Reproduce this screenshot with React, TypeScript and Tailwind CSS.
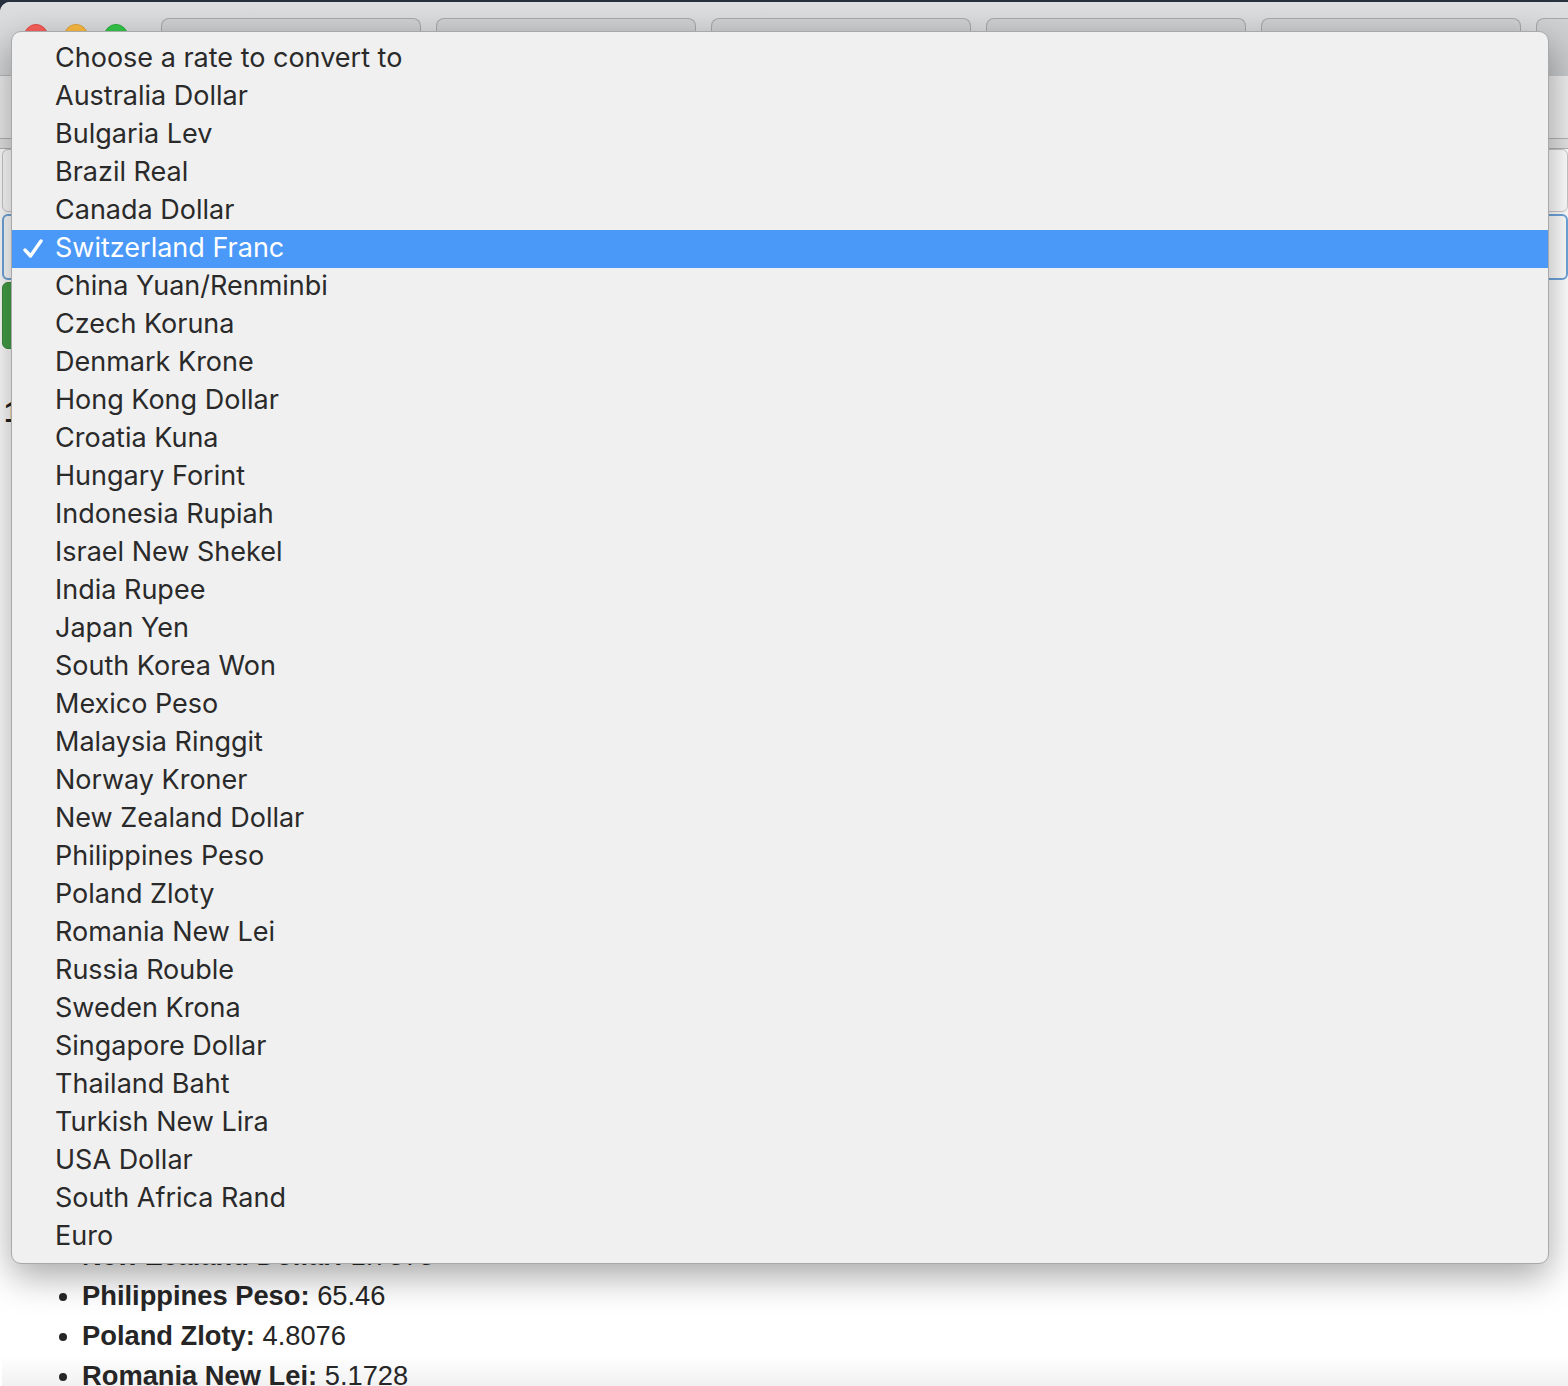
import React from 'react';

const rates = [
  'Choose a rate to convert to',
  'Australia Dollar',
  'Bulgaria Lev',
  'Brazil Real',
  'Canada Dollar',
  'Switzerland Franc',
  'China Yuan/Renminbi',
  'Czech Koruna',
  'Denmark Krone',
  'Hong Kong Dollar',
  'Croatia Kuna',
  'Hungary Forint',
  'Indonesia Rupiah',
  'Israel New Shekel',
  'India Rupee',
  'Japan Yen',
  'South Korea Won',
  'Mexico Peso',
  'Malaysia Ringgit',
  'Norway Kroner',
  'New Zealand Dollar',
  'Philippines Peso',
  'Poland Zloty',
  'Romania New Lei',
  'Russia Rouble',
  'Sweden Krona',
  'Singapore Dollar',
  'Thailand Baht',
  'Turkish New Lira',
  'USA Dollar',
  'South Africa Rand',
  'Euro',
];

const selected = 'Switzerland Franc';

const listed = [
  { name: 'New Zealand Dollar', value: '1.7373' },
  { name: 'Philippines Peso', value: '65.46' },
  { name: 'Poland Zloty', value: '4.8076' },
  { name: 'Romania New Lei', value: '5.1728' },
];

const tabs = [0, 1, 2, 3, 4, 5];

const Check = () => (
  <svg width="22" height="22" viewBox="0 0 22 22" className="shrink-0">
    <path d="M3 12 L8.5 18 L19 3" fill="none" stroke="#fff" strokeWidth="3.4" strokeLinecap="round" strokeLinejoin="round" />
  </svg>
);

export default function App() {
  return (
    <div className="relative h-[1386px] w-[1568px] overflow-hidden bg-[#26313d] font-['Liberation_Sans',sans-serif]">
      <div className="flex h-full flex-col rounded-tl-[10px] mt-[2px] overflow-hidden bg-white">
        {/* window toolbar with tabs */}
        <div className="flex h-[74px] shrink-0 items-start bg-gradient-to-b from-[#dcdee0] to-[#d3d5d7] border-b border-[#b9b9b9]">
          <div className="flex items-center gap-[16px] pl-[24px] pt-[22px]">
            <span className="h-[24px] w-[24px] rounded-full bg-[#fc605c] border border-[#de4a46]" />
            <span className="h-[24px] w-[24px] rounded-full bg-[#fdbc40] border border-[#de9f34]" />
            <span className="h-[24px] w-[24px] rounded-full bg-[#34c84a] border border-[#27aa35]" />
          </div>
          <div className="ml-[33px] flex gap-[15px] pt-[16px]">
            {tabs.map((t) => (
              <div key={t} className="h-[58px] w-[260px] rounded-t-[8px] border border-b-0 border-[#a8a8a8] bg-gradient-to-b from-[#cfd1d3] to-[#c6c8ca]" />
            ))}
          </div>
          <div className="ml-auto mr-0 mt-[34px] flex h-[28px] w-[18px] items-center justify-end">
            <svg width="18" height="28" viewBox="0 0 18 28">
              <path d="M2 4 L9 0 L18 2 L18 24 L10 20 L2 26 Z" fill="#1769c2" />
              <circle cx="14" cy="13" r="7" fill="#fff" />
            </svg>
          </div>
        </div>
        {/* secondary bar */}
        <div className="h-[62px] shrink-0 bg-[#ececec]" />
        <div className="h-[11px] shrink-0 border-y border-[#b3b3b3] bg-[#e3e3e3]" />

        {/* page content */}
        <div className="flex flex-1 flex-col bg-white pl-[2px]">
          <div className="h-[63px] rounded-[6px] border border-[#c8c8c8] bg-white" />
          <div className="mt-[2px] h-[66px] rounded-[6px] border-2 border-[#6ea6dc] bg-white" />
          <div className="mt-[2px] h-[67px] w-[300px] rounded-[6px] bg-[#44a047] border border-[#3a8a3d]" />
          <div className="mt-[40px] pl-[2px] text-[30px] font-bold text-[#222]">1 USD</div>
          <div className="flex-1" />
          <ul className="-mb-[8px] pl-[80px] text-[27.3px] leading-[40px] text-[#262626] list-disc bg-gradient-to-b from-white from-[75%] to-[#ececec]">
            {listed.map((r) => (
              <li key={r.name}>
                <b>{r.name}:</b> {r.value}
              </li>
            ))}
          </ul>
        </div>
      </div>

      {/* native select popup menu */}
      <div className="absolute left-[11px] top-[31px] w-[1538px] rounded-[10px] border border-[#a9a9a9] bg-[#f0f0f0] pt-[8px] pb-[7px] shadow-[0_12px_36px_rgba(0,0,0,0.35)] font-['Inter',sans-serif] text-[27px] text-[#2a2a2a]">
        {rates.map((r) => {
          const on = r === selected;
          return (
            <div key={r} className={`flex h-[38px] items-center ${on ? 'bg-[#4a98f8] text-white' : ''}`}>
              <div className="flex w-[43px] justify-start pl-[10px]">{on && <Check />}</div>
              <span className="-mt-[1px]">{r}</span>
            </div>
          );
        })}
      </div>
    </div>
  );
}
